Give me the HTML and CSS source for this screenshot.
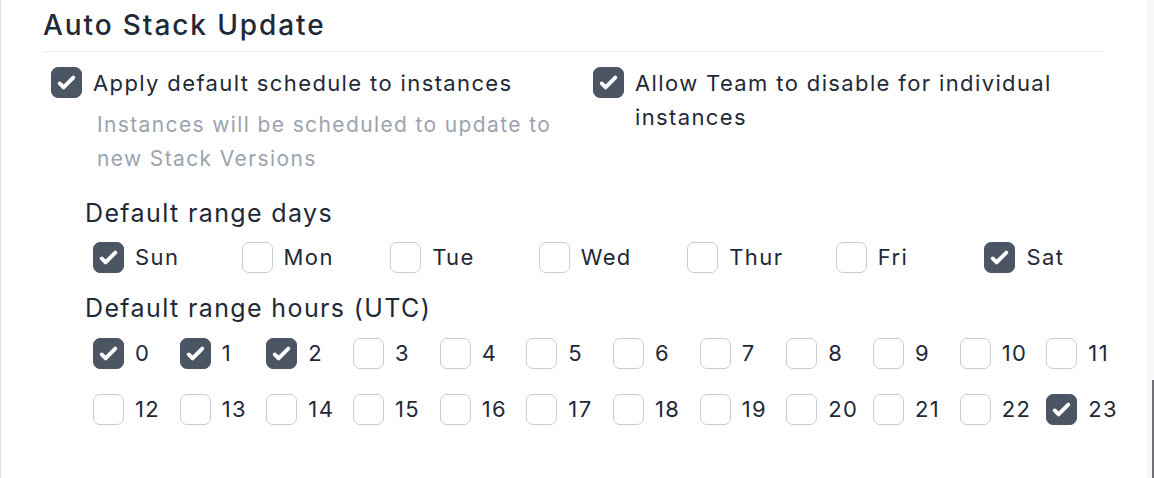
FILE: index.html
```html
<!DOCTYPE html>
<html lang="en">
<head>
<meta charset="utf-8">
<title>Auto Stack Update</title>
<link rel="stylesheet" href="styles.css">
</head>
<body>
<div class="frame">
  <section class="panel">
    <header class="panel-head">
      <h2 class="panel-title">Auto Stack Update</h2>
    </header>

    <div class="options">
      <div class="option">
        <label class="check">
          <span class="box is-on"><svg viewBox="0 0 16 16"><path d="M12.207 4.793a1 1 0 010 1.414l-5 5a1 1 0 01-1.414 0l-2-2a1 1 0 011.414-1.414L6.5 9.086l4.293-4.293a1 1 0 011.414 0z"/></svg></span>
          <span class="check-text">Apply default schedule to instances</span>
        </label>
        <p class="hint">Instances will be scheduled to update to new Stack Versions</p>
      </div>
      <div class="option">
        <label class="check">
          <span class="box is-on"><svg viewBox="0 0 16 16"><path d="M12.207 4.793a1 1 0 010 1.414l-5 5a1 1 0 01-1.414 0l-2-2a1 1 0 011.414-1.414L6.5 9.086l4.293-4.293a1 1 0 011.414 0z"/></svg></span>
          <span class="check-text">Allow Team to disable for individual instances</span>
        </label>
      </div>
    </div>

    <div class="schedule">
      <h3 class="group-label">Default range days</h3>
      <div class="grid days">
        <label class="cell"><span class="box is-on"><svg viewBox="0 0 16 16"><path d="M12.207 4.793a1 1 0 010 1.414l-5 5a1 1 0 01-1.414 0l-2-2a1 1 0 011.414-1.414L6.5 9.086l4.293-4.293a1 1 0 011.414 0z"/></svg></span><span>Sun</span></label>
        <label class="cell"><span class="box"></span><span>Mon</span></label>
        <label class="cell"><span class="box"></span><span>Tue</span></label>
        <label class="cell"><span class="box"></span><span>Wed</span></label>
        <label class="cell"><span class="box"></span><span>Thur</span></label>
        <label class="cell"><span class="box"></span><span>Fri</span></label>
        <label class="cell"><span class="box is-on"><svg viewBox="0 0 16 16"><path d="M12.207 4.793a1 1 0 010 1.414l-5 5a1 1 0 01-1.414 0l-2-2a1 1 0 011.414-1.414L6.5 9.086l4.293-4.293a1 1 0 011.414 0z"/></svg></span><span>Sat</span></label>
      </div>

      <h3 class="group-label hours-label">Default range hours (UTC)</h3>
      <div class="grid hours">
        <label class="cell"><span class="box is-on"><svg viewBox="0 0 16 16"><path d="M12.207 4.793a1 1 0 010 1.414l-5 5a1 1 0 01-1.414 0l-2-2a1 1 0 011.414-1.414L6.5 9.086l4.293-4.293a1 1 0 011.414 0z"/></svg></span><span>0</span></label>
        <label class="cell"><span class="box is-on"><svg viewBox="0 0 16 16"><path d="M12.207 4.793a1 1 0 010 1.414l-5 5a1 1 0 01-1.414 0l-2-2a1 1 0 011.414-1.414L6.5 9.086l4.293-4.293a1 1 0 011.414 0z"/></svg></span><span>1</span></label>
        <label class="cell"><span class="box is-on"><svg viewBox="0 0 16 16"><path d="M12.207 4.793a1 1 0 010 1.414l-5 5a1 1 0 01-1.414 0l-2-2a1 1 0 011.414-1.414L6.5 9.086l4.293-4.293a1 1 0 011.414 0z"/></svg></span><span>2</span></label>
        <label class="cell"><span class="box"></span><span>3</span></label>
        <label class="cell"><span class="box"></span><span>4</span></label>
        <label class="cell"><span class="box"></span><span>5</span></label>
        <label class="cell"><span class="box"></span><span>6</span></label>
        <label class="cell"><span class="box"></span><span>7</span></label>
        <label class="cell"><span class="box"></span><span>8</span></label>
        <label class="cell"><span class="box"></span><span>9</span></label>
        <label class="cell"><span class="box"></span><span>10</span></label>
        <label class="cell"><span class="box"></span><span>11</span></label>
        <label class="cell"><span class="box"></span><span>12</span></label>
        <label class="cell"><span class="box"></span><span>13</span></label>
        <label class="cell"><span class="box"></span><span>14</span></label>
        <label class="cell"><span class="box"></span><span>15</span></label>
        <label class="cell"><span class="box"></span><span>16</span></label>
        <label class="cell"><span class="box"></span><span>17</span></label>
        <label class="cell"><span class="box"></span><span>18</span></label>
        <label class="cell"><span class="box"></span><span>19</span></label>
        <label class="cell"><span class="box"></span><span>20</span></label>
        <label class="cell"><span class="box"></span><span>21</span></label>
        <label class="cell"><span class="box"></span><span>22</span></label>
        <label class="cell"><span class="box is-on"><svg viewBox="0 0 16 16"><path d="M12.207 4.793a1 1 0 010 1.414l-5 5a1 1 0 01-1.414 0l-2-2a1 1 0 011.414-1.414L6.5 9.086l4.293-4.293a1 1 0 011.414 0z"/></svg></span><span>23</span></label>
      </div>
    </div>
  </section>
</div>
<div class="scroll-track"><div class="scroll-thumb"></div></div>
</body>
</html>
```

FILE: styles.css
```css
* { box-sizing: border-box; }

html, body {
  margin: 0;
  padding: 0;
  background: #ffffff;
}

body {
  font-family: Inter, "Noto Sans", "Liberation Sans", sans-serif;
  letter-spacing: 0.086em;
  color: #1f2937;
  width: 1154px;
  height: 478px;
  overflow: hidden;
}

.frame {
  height: 478px;
  border-left: 1px solid #dfe2e7;
  padding: 8px 0 0 42px;
}

.panel {
  width: 1062px;
}

.panel-head {
  padding-bottom: 9px;
  border-bottom: 1px solid #e9ebee;
}

.panel-title {
  margin: 0;
  font-size: 28px;
  line-height: 34px;
  font-weight: 500;
  letter-spacing: 0.068em;
  color: #1f2937;
}

.options {
  display: grid;
  grid-template-columns: 542px 1fr;
  padding-left: 8px;
  margin-top: 14px;
}

.check {
  display: flex;
  align-items: flex-start;
  gap: 11px;
  font-size: 22px;
  line-height: 34px;
  font-weight: 400;
  color: #1f2937;
}

.check .box {
  margin-top: 1px;
}

.check-text {
  flex: 1;
  max-width: 470px;
}

.hint {
  margin: 8px 0 0 46px;
  max-width: 470px;
  font-size: 21px;
  line-height: 34px;
  color: #9ca3af;
}

.box {
  flex: none;
  width: 31px;
  height: 31px;
  border: 1.5px solid #c8ccd3;
  border-radius: 7px;
  background: #ffffff;
  display: inline-flex;
  align-items: center;
  justify-content: center;
}

.box.is-on {
  background: #4b5563;
  border-color: #4b5563;
}

.box svg {
  width: 31px;
  height: 31px;
  fill: #ffffff;
  flex: none;
}

.schedule {
  margin: 21px 0 0 42px;
}

.group-label {
  margin: 0;
  font-size: 25px;
  line-height: 32px;
  font-weight: 400;
  color: #1f2937;
}

.hours-label {
  margin-top: 18px;
}

.grid {
  display: grid;
  width: 1040px;
  margin-left: 8px;
}

.days {
  grid-template-columns: repeat(7, 1fr);
  margin-top: 11px;
}

.hours {
  grid-template-columns: repeat(12, 1fr);
  row-gap: 22px;
  margin-top: 12px;
}

.cell {
  display: flex;
  align-items: center;
  gap: 11px;
  height: 34px;
  font-size: 22px;
  line-height: 34px;
  color: #1f2937;
}

.scroll-track {
  position: fixed;
  top: 0;
  right: 0;
  width: 7px;
  height: 478px;
  background: #f8f8f9;
}

.scroll-thumb {
  position: absolute;
  top: 380px;
  left: 5px;
  width: 2px;
  height: 98px;
  background: #6f7075;
}
```
